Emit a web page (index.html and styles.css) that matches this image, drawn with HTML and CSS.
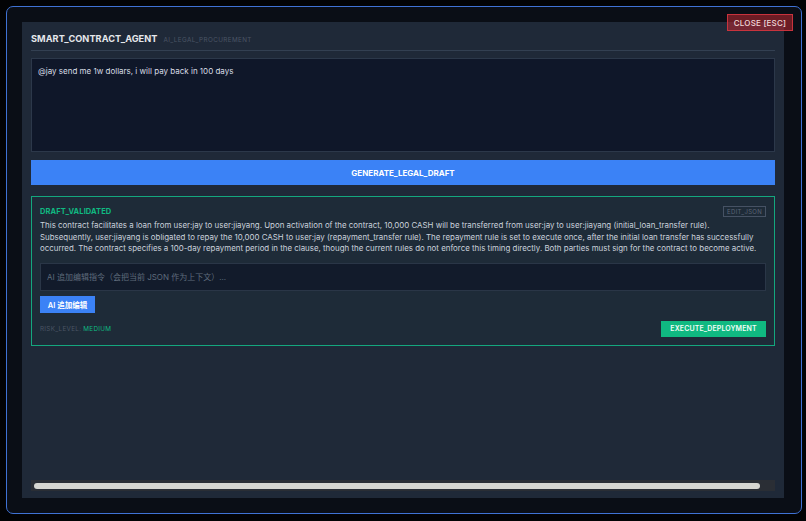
FILE: index.html
```html
<!DOCTYPE html>
<html lang="zh-CN">
<head>
    <meta charset="UTF-8">
    <meta name="viewport" content="width=device-width, initial-scale=1.0">
    <title>Smart Contract Agent</title>
    <link rel="stylesheet" href="styles.css">
</head>
<body>
    <div class="frame">
        <button class="close-btn">CLOSE [ESC]</button>

        <div class="panel">
            <div class="panel-body">
                <div class="header">
                    <span class="title">SMART_CONTRACT_AGENT</span>
                    <span class="subtitle">AI_LEGAL_PROCUREMENT</span>
                </div>

                <div class="prompt">@jay send me 1w dollars, i will pay back in 100 days</div>

                <button class="btn-generate">GENERATE_LEGAL_DRAFT</button>

                <div class="draft">
                    <div class="draft-head">
                        <span class="draft-status">DRAFT_VALIDATED</span>
                        <button class="btn-edit">EDIT_JSON</button>
                    </div>
                    <p class="draft-text">This contract facilitates a loan from user:jay to user:jiayang. Upon activation of the contract, 10,000 CASH will be transferred from user:jay to user:jiayang (initial_loan_transfer rule).<br>Subsequently, user:jiayang is obligated to repay the 10,000 CASH to user:jay (repayment_transfer rule). The repayment rule is set to execute once, after the initial loan transfer has successfully occurred. The contract specifies a 100-day repayment period in the clause, though the current rules do not enforce this timing directly. Both parties must sign for the contract to become active.</p>

                    <div class="ai-input">AI 追加编辑指令（会把当前 JSON 作为上下文）...</div>
                    <button class="btn-ai">AI 追加编辑</button>

                    <div class="draft-foot">
                        <span class="risk">RISK_LEVEL: <span class="risk-value">MEDIUM</span></span>
                        <button class="btn-execute">EXECUTE_DEPLOYMENT</button>
                    </div>
                </div>
            </div>

            <!-- horizontal scroll track -->
            <div class="scroll-track">
                <div class="scroll-thumb"></div>
            </div>
        </div>
    </div>
</body>
</html>
```

FILE: styles.css
```css
* {
    margin: 0;
    padding: 0;
    box-sizing: border-box;
}

body {
    font-family: Inter, 'Noto Sans CJK SC', sans-serif;
    background: #020305;
    height: 100vh;
    padding: 6px 4px 7px 6px;
}

button {
    font-family: inherit;
    border: none;
    cursor: pointer;
}

.frame {
    position: relative;
    height: 100%;
    background: #0a0e16;
    border: 1.5px solid #3f72d4;
    border-radius: 7px;
    padding: 15px 17px 15px 15px;
}

.close-btn {
    position: absolute;
    top: 7px;
    right: 8px;
    width: 66px;
    height: 17px;
    background: rgba(190, 40, 50, 0.55);
    border: 1px solid #c8333d;
    color: #f0d8d8;
    font-size: 8px;
    font-weight: 500;
    letter-spacing: 0.2px;
}

.panel {
    height: 100%;
    background: #1f2938;
    display: flex;
    flex-direction: column;
}

.panel-body {
    padding: 9px 9px 0;
    flex: 1;
}

.header {
    display: flex;
    align-items: baseline;
    gap: 6px;
    height: 20px;
    padding-top: 2px;
    border-bottom: 1px solid #334052;
}

.title {
    color: #e5e7eb;
    font-size: 9.2px;
    font-weight: 700;
    letter-spacing: 0.05px;
}

.subtitle {
    color: #4b5565;
    font-size: 6.3px;
    letter-spacing: 0.4px;
}

.prompt {
    margin-top: 7px;
    height: 94px;
    background: #0f1729;
    border: 1px solid #2c384a;
    padding: 7px 6px;
    color: #d8dde5;
    font-size: 8px;
    line-height: 11px;
}

.btn-generate {
    display: block;
    width: 100%;
    height: 25px;
    margin-top: 8px;
    background: #3b82f6;
    color: #fff;
    font-size: 8px;
    font-weight: 700;
}

.draft {
    margin-top: 11px;
    border: 1px solid #14a77e;
    background: #1e2b38;
    padding: 9px 8px 8px;
}

.draft-head {
    display: flex;
    justify-content: space-between;
    align-items: center;
    height: 11px;
}

.draft-status {
    color: #10b981;
    font-size: 7.5px;
    font-weight: 700;
    letter-spacing: 0.1px;
}

.btn-edit {
    background: transparent;
    border: 1px solid #465264;
    color: #5b6576;
    font-size: 6px;
    padding: 1px 3px;
    height: 11px;
    line-height: 8px;
    letter-spacing: 0.3px;
}

.draft-text {
    margin-top: 3px;
    color: #cbd2dc;
    font-size: 7.9px;
    line-height: 11.5px;
}

.ai-input {
    margin-top: 8px;
    height: 28px;
    background: #121b2b;
    border: 1px solid #2a3647;
    color: #5f6b7c;
    font-size: 8px;
    padding: 0 6px;
    display: flex;
    align-items: center;
}

.btn-ai {
    margin-top: 5px;
    height: 17px;
    width: 55px;
    background: #3b82f6;
    color: #fff;
    font-size: 7.5px;
    font-weight: 600;
}

.draft-foot {
    display: flex;
    justify-content: space-between;
    align-items: center;
    margin-top: 8px;
}

.risk {
    color: #4b5565;
    font-size: 6.3px;
    letter-spacing: 0.3px;
}

.risk-value {
    color: #10b981;
}

.btn-execute {
    width: 105px;
    height: 16px;
    background: #10b981;
    color: #f0fdf7;
    font-size: 7px;
    font-weight: 600;
    letter-spacing: 0.1px;
}

.scroll-track {
    margin: 0 9px 7px;
    height: 11px;
    background: #2a2e35;
    padding: 3px 15px 2px 3px;
}

.scroll-thumb {
    height: 6px;
    background: #d6d6d1;
    border-radius: 3px;
}
```
